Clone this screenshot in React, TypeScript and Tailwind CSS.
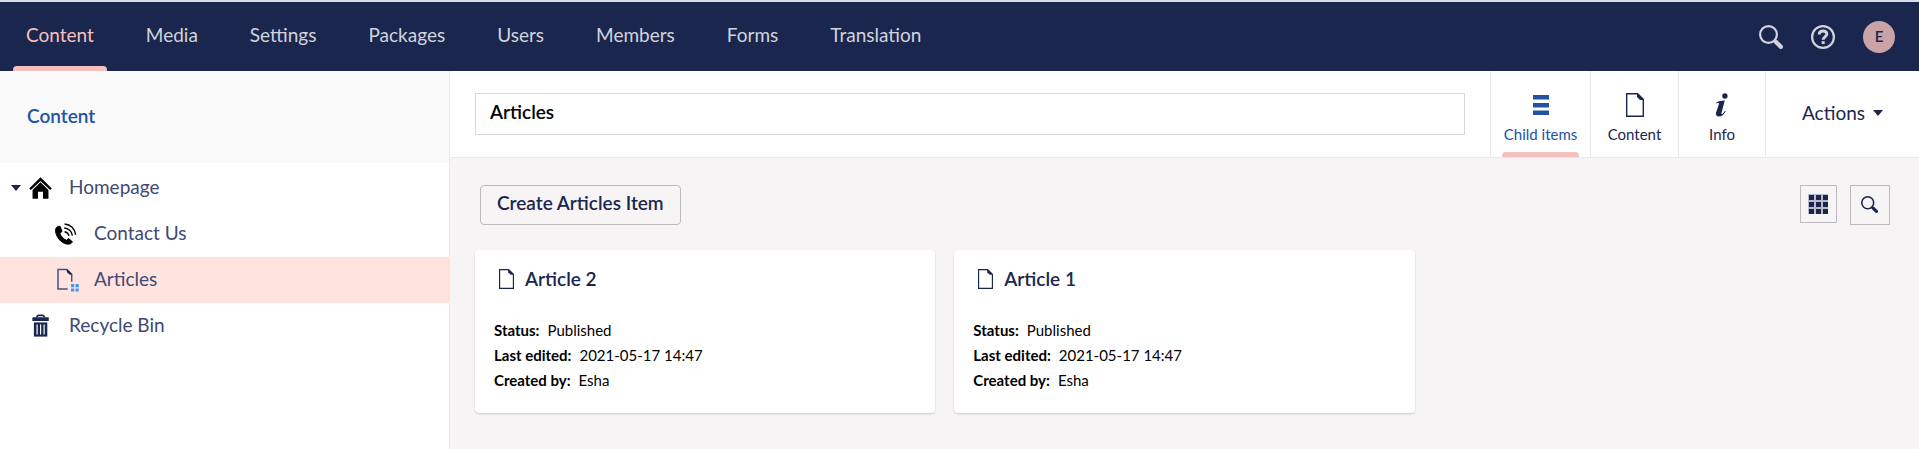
import { ReactNode } from "react";

const sections = ["Content", "Media", "Settings", "Packages", "Users", "Members", "Forms", "Translation"];

const articles = [
  { name: "Article 2", status: "Published", edited: "2021-05-17 14:47", author: "Esha" },
  { name: "Article 1", status: "Published", edited: "2021-05-17 14:47", author: "Esha" },
];

function SearchIcon({ className }: { className: string }) {
  return (
    <svg viewBox="0 0 24 24" className={className} fill="none" stroke="currentColor" aria-hidden="true">
      <circle cx="9.5" cy="9.5" r="8.4" strokeWidth="2.2" />
      <path d="M14.8 15.2L17 17" strokeWidth="2.6" />
      <path d="M16.8 16.8L21.8 21.8" strokeWidth="4.4" strokeLinecap="round" />
    </svg>
  );
}

function HelpIcon() {
  return (
    <svg viewBox="0 0 24 24" className="size-6" fill="none" stroke="currentColor" aria-hidden="true">
      <circle cx="12" cy="12" r="10.9" strokeWidth="2.2" />
      <path d="M8.2 9.6C8.2 7.3 9.8 6 12 6s3.8 1.2 3.8 3.1c0 2.8-3.6 2.7-3.6 5.6" strokeWidth="2.9" />
      <rect x="10.7" y="16.2" width="3" height="2.8" fill="currentColor" stroke="none" />
    </svg>
  );
}

function DocumentIcon({ className }: { className: string }) {
  return (
    <svg viewBox="0 0 18 24" className={className} aria-hidden="true">
      <path d="M0.7 0.7H11.6L17.3 6.4V23.3H0.7Z" fill="none" stroke="currentColor" strokeWidth="1.4" />
      <path d="M11 0L18 7H14L11 4Z" fill="currentColor" />
    </svg>
  );
}

function ListedDocumentIcon() {
  return (
    <svg viewBox="0 0 23 24" className="h-6 w-[23px] overflow-visible" aria-hidden="true">
      <path d="M13.6 21H4V1.4H12.8L17.7 6.4V13.8" fill="none" stroke="#4a5080" strokeWidth="1.5" />
      <path d="M12.8 0.8L18.4 6.6H15.4L12.8 4Z" fill="#1b264f" />
      <path d="M17 16h3.2v3.2H17zM21.5 16h3.2v3.2h-3.2zM17 20.4h3.2v3.2H17zM21.5 20.4h3.2v3.2h-3.2z" fill="#3b97f3" />
    </svg>
  );
}

function HomeIcon() {
  return (
    <svg viewBox="0 0 24 24" className="h-6 w-[23px]" fill="#000" aria-hidden="true">
      <path d="M12 0.8L23.8 12.4L22 14.2L12 4.6L2 14.2L0.2 12.4Z" />
      <path d="M12 6L20.3 14V23.2H14.6V15.8H9.4V23.2H3.7V14Z" />
    </svg>
  );
}

function PhoneIcon() {
  return (
    <svg viewBox="0 0 24 24" className="h-6 w-[23px]" aria-hidden="true">
      <path d="M1.6 8.6C1.4 5.4 3.4 3.7 6.3 3.9L8.4 9.3L6.1 11.2C7 14 9.7 17.2 12.9 18.6L15.2 16.7L19.3 20.2C18 22.2 15.9 23 13.3 22.5C7 21.2 2 15 1.6 8.6Z" fill="#000" stroke="#000" strokeLinejoin="round" strokeWidth="1" />
      <path d="M11 9.6A5.6 5.6 0 0 1 15.6 14M10.6 5.8A9 9 0 0 1 19.2 13.6M11 1.6A12.4 12.4 0 0 1 22.6 12.8" fill="none" stroke="#000" strokeWidth="1.5" />
    </svg>
  );
}

function TrashIcon() {
  return (
    <svg viewBox="0 0 23 24" className="h-6 w-[23px]" aria-hidden="true">
      <path d="M7.8 3.4C8 1.8 8.8 1.4 9.8 1.4H13.4C14.4 1.4 15.2 1.8 15.4 3.4" fill="none" stroke="#1b264f" strokeWidth="1.6" />
      <rect x="3.4" y="3.2" width="16.4" height="3.8" rx="0.6" fill="#1b264f" />
      <path d="M4.9 8.4H18.3V22.6H4.9Z" fill="#1b264f" />
      <path d="M8.1 10.6V20.4M11.6 10.6V20.4M15.1 10.6V20.4" stroke="#fff" strokeWidth="1.2" />
    </svg>
  );
}

function ListIcon() {
  return (
    <svg viewBox="0 0 16 20" className="h-5 w-4" fill="currentColor" aria-hidden="true">
      <path d="M0 0H16V4.5H0zM0 8H16V12.5H0zM0 15.5H16V20H0z" />
    </svg>
  );
}

function InfoIcon() {
  return (
    <svg viewBox="0 0 14 24" className="h-6 w-3.5" fill="currentColor" aria-hidden="true">
      <circle cx="9.9" cy="3" r="2.7" />
      <path d="M1.2 9.6C3.5 8.2 6 7.6 9.8 7.5L6.6 19.5C6.2 21 6.6 21.4 7.6 20.7C8.5 20 9.2 19 10 17.7L10.8 18.2C8.8 21.7 6.8 23.6 4 23.6C1.3 23.6 0.4 21.9 1.1 19.6L3.8 11.4C4.2 10 3.8 9.6 1.2 10.5Z" />
    </svg>
  );
}

function GridIcon() {
  return (
    <svg viewBox="0 0 20 20" className="size-5" fill="currentColor" aria-hidden="true">
      <path d="M0 0H20V20H0z" fill="#babbc9" />
      <path d="M1 1h5v5H1zM8 1h5v5H8zM15 1h5v5h-5zM1 8h5v5H1zM8 8h5v5H8zM15 8h5v5h-5zM1 15h5v5H1zM8 15h5v5H8zM15 15h5v5h-5z" />
    </svg>
  );
}

function Caret() {
  return (
    <svg viewBox="0 0 10 6" className="h-1.5 w-2.5" fill="#1b264f" aria-hidden="true">
      <path d="M0 0H10L5 6Z" />
    </svg>
  );
}

function TreeRow({ label, icon, indent, selected, expandable }: { label: string; icon: ReactNode; indent?: boolean; selected?: boolean; expandable?: boolean }) {
  return (
    <li className={selected ? "flex h-[46px] items-center bg-[#ffe3df]" : "flex h-[46px] items-center"}>
      <span className={indent ? "flex w-[54px] pl-[11px]" : "flex w-[29px] pl-[11px]"}>
        {expandable && (
          <button type="button" aria-label={"Collapse " + label}>
            <Caret />
          </button>
        )}
      </span>
      <a href="#" className="flex items-center gap-[17px] text-[19px] leading-6 text-[#414875]">
        {icon}
        <span className="pb-0.5">{label}</span>
      </a>
    </li>
  );
}

function EditorTab({ label, icon, active, width }: { label: string; icon: ReactNode; active?: boolean; width: string }) {
  return (
    <button
      type="button"
      className={"relative flex flex-col items-center border-l border-[#e9e9eb] pt-[21px] text-[15px] leading-5 " + width + (active ? " text-[#2152a3]" : " text-[#1b264f]")}
    >
      <span className="flex h-[26px] items-center">{icon}</span>
      <span className="mt-1.5">{label}</span>
      {active && <span className="absolute inset-x-[11px] bottom-0 h-[5px] rounded-t bg-[#f5c1bc]" />}
    </button>
  );
}

function ArticleCard({ article }: { article: (typeof articles)[number] }) {
  const details = [
    ["Status:", article.status],
    ["Last edited:", article.edited],
    ["Created by:", article.author],
  ];
  return (
    <article className="rounded bg-white px-[19px] pt-[17px] pb-5 shadow-[0_1px_2px_rgba(0,0,0,0.18)]">
      <h2 className="flex items-center gap-[11px] pl-[5px] text-[19px] leading-6 font-semibold text-[#1b264f]">
        <DocumentIcon className="h-5 w-[15px]" />
        <a href="#">{article.name}</a>
      </h2>
      <dl className="mt-[27px] text-[15px] leading-[25px] text-black">
        {details.map(([term, value]) => (
          <div key={term} className="flex gap-2">
            <dt className="font-bold">{term}</dt>
            <dd>{value}</dd>
          </div>
        ))}
      </dl>
    </article>
  );
}

export default function App() {
  return (
    <div className="flex min-h-screen flex-col bg-[#f6f4f5] font-['Lato',sans-serif]">
      <header className="flex h-[71px] items-stretch justify-between border-t-2 border-[#d9dbe6] bg-[#1b264f] pr-6 text-[#d1d4dc]">
        <nav className="flex">
          {sections.map((name, i) => (
            <a
              key={name}
              href="#"
              className={"relative flex items-center px-[26px] pb-[3px] text-[19px] leading-6 font-normal" + (i === 0 ? " text-[#f5c1bc]" : "")}
            >
              {name}
              {i === 0 && <span className="absolute inset-x-[13px] bottom-0 h-[5px] rounded-t bg-[#f5c1bc]" />}
            </a>
          ))}
        </nav>
        <div className="flex items-center gap-7">
          <button type="button" aria-label="Search">
            <SearchIcon className="size-6" />
          </button>
          <button type="button" aria-label="Help">
            <HelpIcon />
          </button>
          <button type="button" className="flex size-8 items-center justify-center rounded-full bg-[#c9a3a6] text-[15px] font-semibold text-[#1b264f]">
            E
          </button>
        </div>
      </header>

      <div className="flex grow">
        <aside className="w-[450px] shrink-0 border-r border-[#e9e9eb] bg-white">
          <h1 className="flex h-[92px] items-center bg-[#f9f9f9] pb-0.5 pl-[27px] text-[19px] leading-6 font-semibold text-[#2152a3]">
            <a href="#">Content</a>
          </h1>
          <ul className="pt-0.5">
            <TreeRow label="Homepage" icon={<HomeIcon />} expandable />
            <TreeRow label="Contact Us" icon={<PhoneIcon />} indent />
            <TreeRow label="Articles" icon={<ListedDocumentIcon />} indent selected />
            <TreeRow label="Recycle Bin" icon={<TrashIcon />} />
          </ul>
        </aside>

        <main className="min-w-0 grow">
          <div className="flex h-[87px] border-b border-[#e9e9eb] bg-white">
            <div className="flex grow items-center px-[25px]">
              <input
                type="text"
                aria-label="Name"
                defaultValue="Articles"
                className="h-[42px] w-full border border-[#d8d7d9] px-3.5 pb-1.5 text-[19px] font-semibold text-black outline-none"
              />
            </div>
            <EditorTab label="Child items" icon={<ListIcon />} active width="w-[100px]" />
            <EditorTab label="Content" icon={<DocumentIcon className="h-6 w-[18px]" />} width="w-[88px]" />
            <EditorTab label="Info" icon={<InfoIcon />} width="w-[87px]" />
            <button type="button" className="flex w-[154px] items-center justify-center gap-2 border-l border-[#e9e9eb] pb-0.5 text-[19px] leading-6 text-[#1b264f]">
              Actions
              <Caret />
            </button>
          </div>

          <div className="px-[25px] pt-[27px] pb-9">
            <div className="flex items-start justify-between pr-1 pl-[5px]">
              <button type="button" className="h-10 rounded border border-[#bbbac0] px-4 pb-1 text-[19px] leading-6 font-semibold text-[#1b264f]">
                Create Articles Item
              </button>
              <div className="flex items-start gap-[13px] text-[#1b264f]">
                <button type="button" aria-label="Grid layout" className="flex h-[38px] w-[37px] items-center justify-center border border-[#bbbac0] pr-px">
                  <GridIcon />
                </button>
                <button type="button" aria-label="Search items" className="flex size-10 items-center justify-center border border-[#bbbac0] pr-px pb-px">
                  <SearchIcon className="size-[17px]" />
                </button>
              </div>
            </div>
            <div className="mt-[25px] grid grid-cols-3 gap-[19px]">
              {articles.map((article) => (
                <ArticleCard key={article.name} article={article} />
              ))}
            </div>
          </div>
        </main>
      </div>
    </div>
  );
}
